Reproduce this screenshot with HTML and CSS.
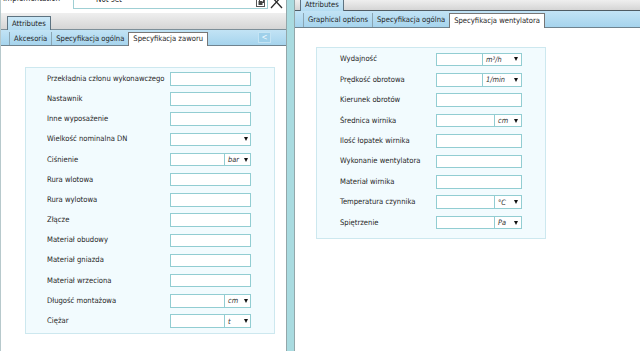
FILE: index.html
```html
<!DOCTYPE html>
<html>
<head>
<meta charset="utf-8">
<link rel="stylesheet" href="styles.css">
</head>
<body>
<div class="app">
  <div class="pane pane-left">
    <div class="props">
      <span class="props-label">Implementation</span>
      <div class="props-field">
        <svg class="ico-dots" width="10" height="4" viewBox="0 0 10 4"><rect x="0" y="0" width="10" height="3" fill="#9a9a9a"/></svg>
        <span class="props-value">Not set</span>
        <svg class="ico-restore" width="9" height="9" viewBox="0 0 9 9"><rect x="0.5" y="0.5" width="8" height="8" fill="#fff" stroke="#555"/><rect x="2.5" y="3" width="4" height="4" fill="#444"/><rect x="3.5" y="1.5" width="4" height="3" fill="none" stroke="#444"/></svg>
      </div>
      <svg class="ico-close" width="13" height="11" viewBox="0 0 13 11"><path d="M1 -2 L12 10 M12 -2 L1 10" stroke="#2a2a2a" stroke-width="1.3" fill="none"/></svg>
    </div>
    <div class="band">
      <div class="tab-main">Attributes</div>
    </div>
    <div class="subtabs">
      <div class="subtab">Akcesoria</div>
      <div class="subtab">Specyfikacja ogólna</div>
      <div class="subtab active">Specyfikacja zaworu</div>
      <div class="collapse">&lt;</div>
    </div>
    <div class="content">
      <div class="form form-left">
        <div class="lbl">Przekładnia członu wykonawczego</div><div class="field"></div>
        <div class="lbl">Nastawnik</div><div class="field"></div>
        <div class="lbl">Inne wyposażenie</div><div class="field"></div>
        <div class="lbl">Wielkość nominalna DN</div><div class="field"><span class="grow"></span><span class="arrow"></span></div>
        <div class="lbl">Ciśnienie</div><div class="field"><span class="grow"></span><span class="unit unit-s"><span class="utext">bar</span><span class="arrow"></span></span></div>
        <div class="lbl">Rura wlotowa</div><div class="field"></div>
        <div class="lbl">Rura wylotowa</div><div class="field"></div>
        <div class="lbl">Złącze</div><div class="field"></div>
        <div class="lbl">Materiał obudowy</div><div class="field"></div>
        <div class="lbl">Materiał gniazda</div><div class="field"></div>
        <div class="lbl">Materiał wrzeciona</div><div class="field"></div>
        <div class="lbl">Długość montażowa</div><div class="field"><span class="grow"></span><span class="unit unit-s"><span class="utext">cm</span><span class="arrow"></span></span></div>
        <div class="lbl">Ciężar</div><div class="field"><span class="grow"></span><span class="unit unit-s"><span class="utext">t</span><span class="arrow"></span></span></div>
      </div>
    </div>
  </div>
  <div class="divider"></div>
  <div class="pane pane-right">
    <div class="band band-right">
      <div class="tab-main">Attributes</div>
    </div>
    <div class="subtabs subtabs-right">
      <div class="subtab">Graphical options</div>
      <div class="subtab">Specyfikacja ogólna</div>
      <div class="subtab active">Specyfikacja wentylatora</div>
    </div>
    <div class="content">
      <div class="form form-right">
        <div class="lbl">Wydajność</div><div class="field"><span class="grow"></span><span class="unit unit-l"><span class="utext">m³/h</span><span class="arrow"></span></span></div>
        <div class="lbl">Prędkość obrotowa</div><div class="field"><span class="grow"></span><span class="unit unit-l"><span class="utext">1/min</span><span class="arrow"></span></span></div>
        <div class="lbl">Kierunek obrotów</div><div class="field"></div>
        <div class="lbl">Średnica wirnika</div><div class="field"><span class="grow"></span><span class="unit unit-m"><span class="utext">cm</span><span class="arrow"></span></span></div>
        <div class="lbl">Ilość łopatek wirnika</div><div class="field"></div>
        <div class="lbl">Wykonanie wentylatora</div><div class="field"></div>
        <div class="lbl">Materiał wirnika</div><div class="field"></div>
        <div class="lbl">Temperatura czynnika</div><div class="field"><span class="grow"></span><span class="unit unit-m"><span class="utext">°C</span><span class="arrow"></span></span></div>
        <div class="lbl">Spiętrzenie</div><div class="field"><span class="grow"></span><span class="unit unit-m"><span class="utext">Pa</span><span class="arrow"></span></span></div>
      </div>
    </div>
  </div>
</div>
</body>
</html>
```
FILE: styles.css
```css
* { box-sizing: border-box; }
html, body { margin: 0; padding: 0; }
body {
  width: 640px;
  height: 351px;
  overflow: hidden;
  background: #fff;
  font-family: "DejaVu Sans Condensed", "Liberation Sans", sans-serif;
  font-size: 7.6px;
  color: #262626;
}
.app { display: flex; height: 351px; }
.pane { display: flex; flex-direction: column; background: #fff; }
.pane-left { width: 286px; border-left: 1px solid #b7c9cc; }
.divider {
  width: 9px;
  background: #a9dbe0;
  border-left: 1px solid #93a7aa;
  border-right: 1px solid #93a7aa;
}
.pane-right { flex: 1; }

/* top property row (cut off) */
.props {
  height: 13px;
  overflow: hidden;
  display: flex;
  align-items: flex-end;
  padding-bottom: 4px;
}
.props-label {
  width: 72px;
  padding-left: 2px;
  font-size: 8px;
  line-height: 8px;
  margin-bottom: 6px;
}
.props-field {
  width: 195px;
  height: 22px;
  border: 1px solid #9fcfd4;
  display: flex;
  align-items: flex-end;
  padding: 0 2px 1px 6px;
}
.ico-dots { margin-bottom: 8px; margin-right: 6px; }
.props-value { flex: 1; font-size: 8px; line-height: 8px; margin-bottom: 3px; }
.ico-restore { display: block; }
.ico-close { margin-left: 2px; display: block; }

/* first-level tab band */
.band {
  height: 17px;
  background: linear-gradient(#efefef, #d5d5d5);
  border-bottom: 1px solid #7d8f99;
  display: flex;
  align-items: flex-end;
  padding-left: 6px;
}
.tab-main {
  position: relative;
  z-index: 1;
  height: 14px;
  margin-bottom: -1px;
  padding: 0 4px;
  line-height: 13px;
  border: 1px solid #5d7381;
  border-bottom: none;
  background: linear-gradient(#cbe8f7, #b4dcf1);
  color: #1e1e1e;
}
.band-right {
  height: 11px;
  border-bottom-color: #4f5b63;
  padding-left: 5px;
}
.band-right .tab-main { height: 12px; line-height: 9px; }

/* second-level tabs */
.subtabs {
  height: 16px;
  background: linear-gradient(#c2e3f5, #a6d4ed);
  border-bottom: 1px solid #6f838f;
  display: flex;
  align-items: flex-end;
  padding-left: 8px;
}
.subtabs-right { height: 17px; }
.subtab {
  height: 13px;
  line-height: 13px;
  padding: 0 4px;
  border-left: 1px solid #8aa5b3;
  white-space: nowrap;
}
.subtab.active {
  position: relative;
  z-index: 1;
  height: 14px;
  margin-bottom: -1px;
  background: #fff;
  border: 1px solid #767676;
  border-bottom: none;
  line-height: 12px;
}
.subtabs-right .subtab { height: 14px; line-height: 14px; }
.subtabs-right .subtab.active { height: 15px; line-height: 13px; }
.collapse {
  margin-left: auto;
  margin-right: 15px;
  margin-bottom: 2px;
  width: 13px;
  height: 11px;
  background: #9fd0ea;
  border: 1px solid #c4e4f4;
  color: #eef8fd;
  font-size: 8px;
  line-height: 9px;
  text-align: center;
}

/* content */
.content { flex: 1; background: #fff; }
.form {
  display: grid;
  grid-auto-rows: 13.5px;
  border: 1px solid #cde8ef;
  background: #f2fbfe;
}
.form-left {
  margin: 21px 0 0 24px;
  width: 250px;
  padding: 4px 23px 5px 21px;
  grid-template-columns: 123px 81px;
  row-gap: 6.7px;
}
.form-right {
  margin: 19px 0 0 21px;
  width: 230px;
  padding: 4.7px 23px 8.5px 23px;
  grid-template-columns: 96px 86px;
  row-gap: 6.9px;
}
.lbl {
  align-self: center;
  white-space: nowrap;
  line-height: 10px;
}
.field {
  background: #fff;
  border: 1px solid #92cdd2;
  display: flex;
  align-items: stretch;
}
.grow { flex: 1; }
.unit {
  border-left: 1px solid #92cdd2;
  display: flex;
  align-items: center;
  padding: 0 2px 0 3px;
  font-style: italic;
  font-size: 7.4px;
  color: #333;
}
.unit-s { width: 26px; }
.unit-l { width: 39px; padding-right: 3px; }
.unit-m { width: 27px; padding-right: 3px; }
.utext { flex: 1; }
.arrow {
  align-self: center;
  width: 0;
  height: 0;
  border-left: 2.5px solid transparent;
  border-right: 2.5px solid transparent;
  border-top: 4px solid #111;
  margin-right: 0;
}
.field > .arrow { margin-right: 2px; }
```
